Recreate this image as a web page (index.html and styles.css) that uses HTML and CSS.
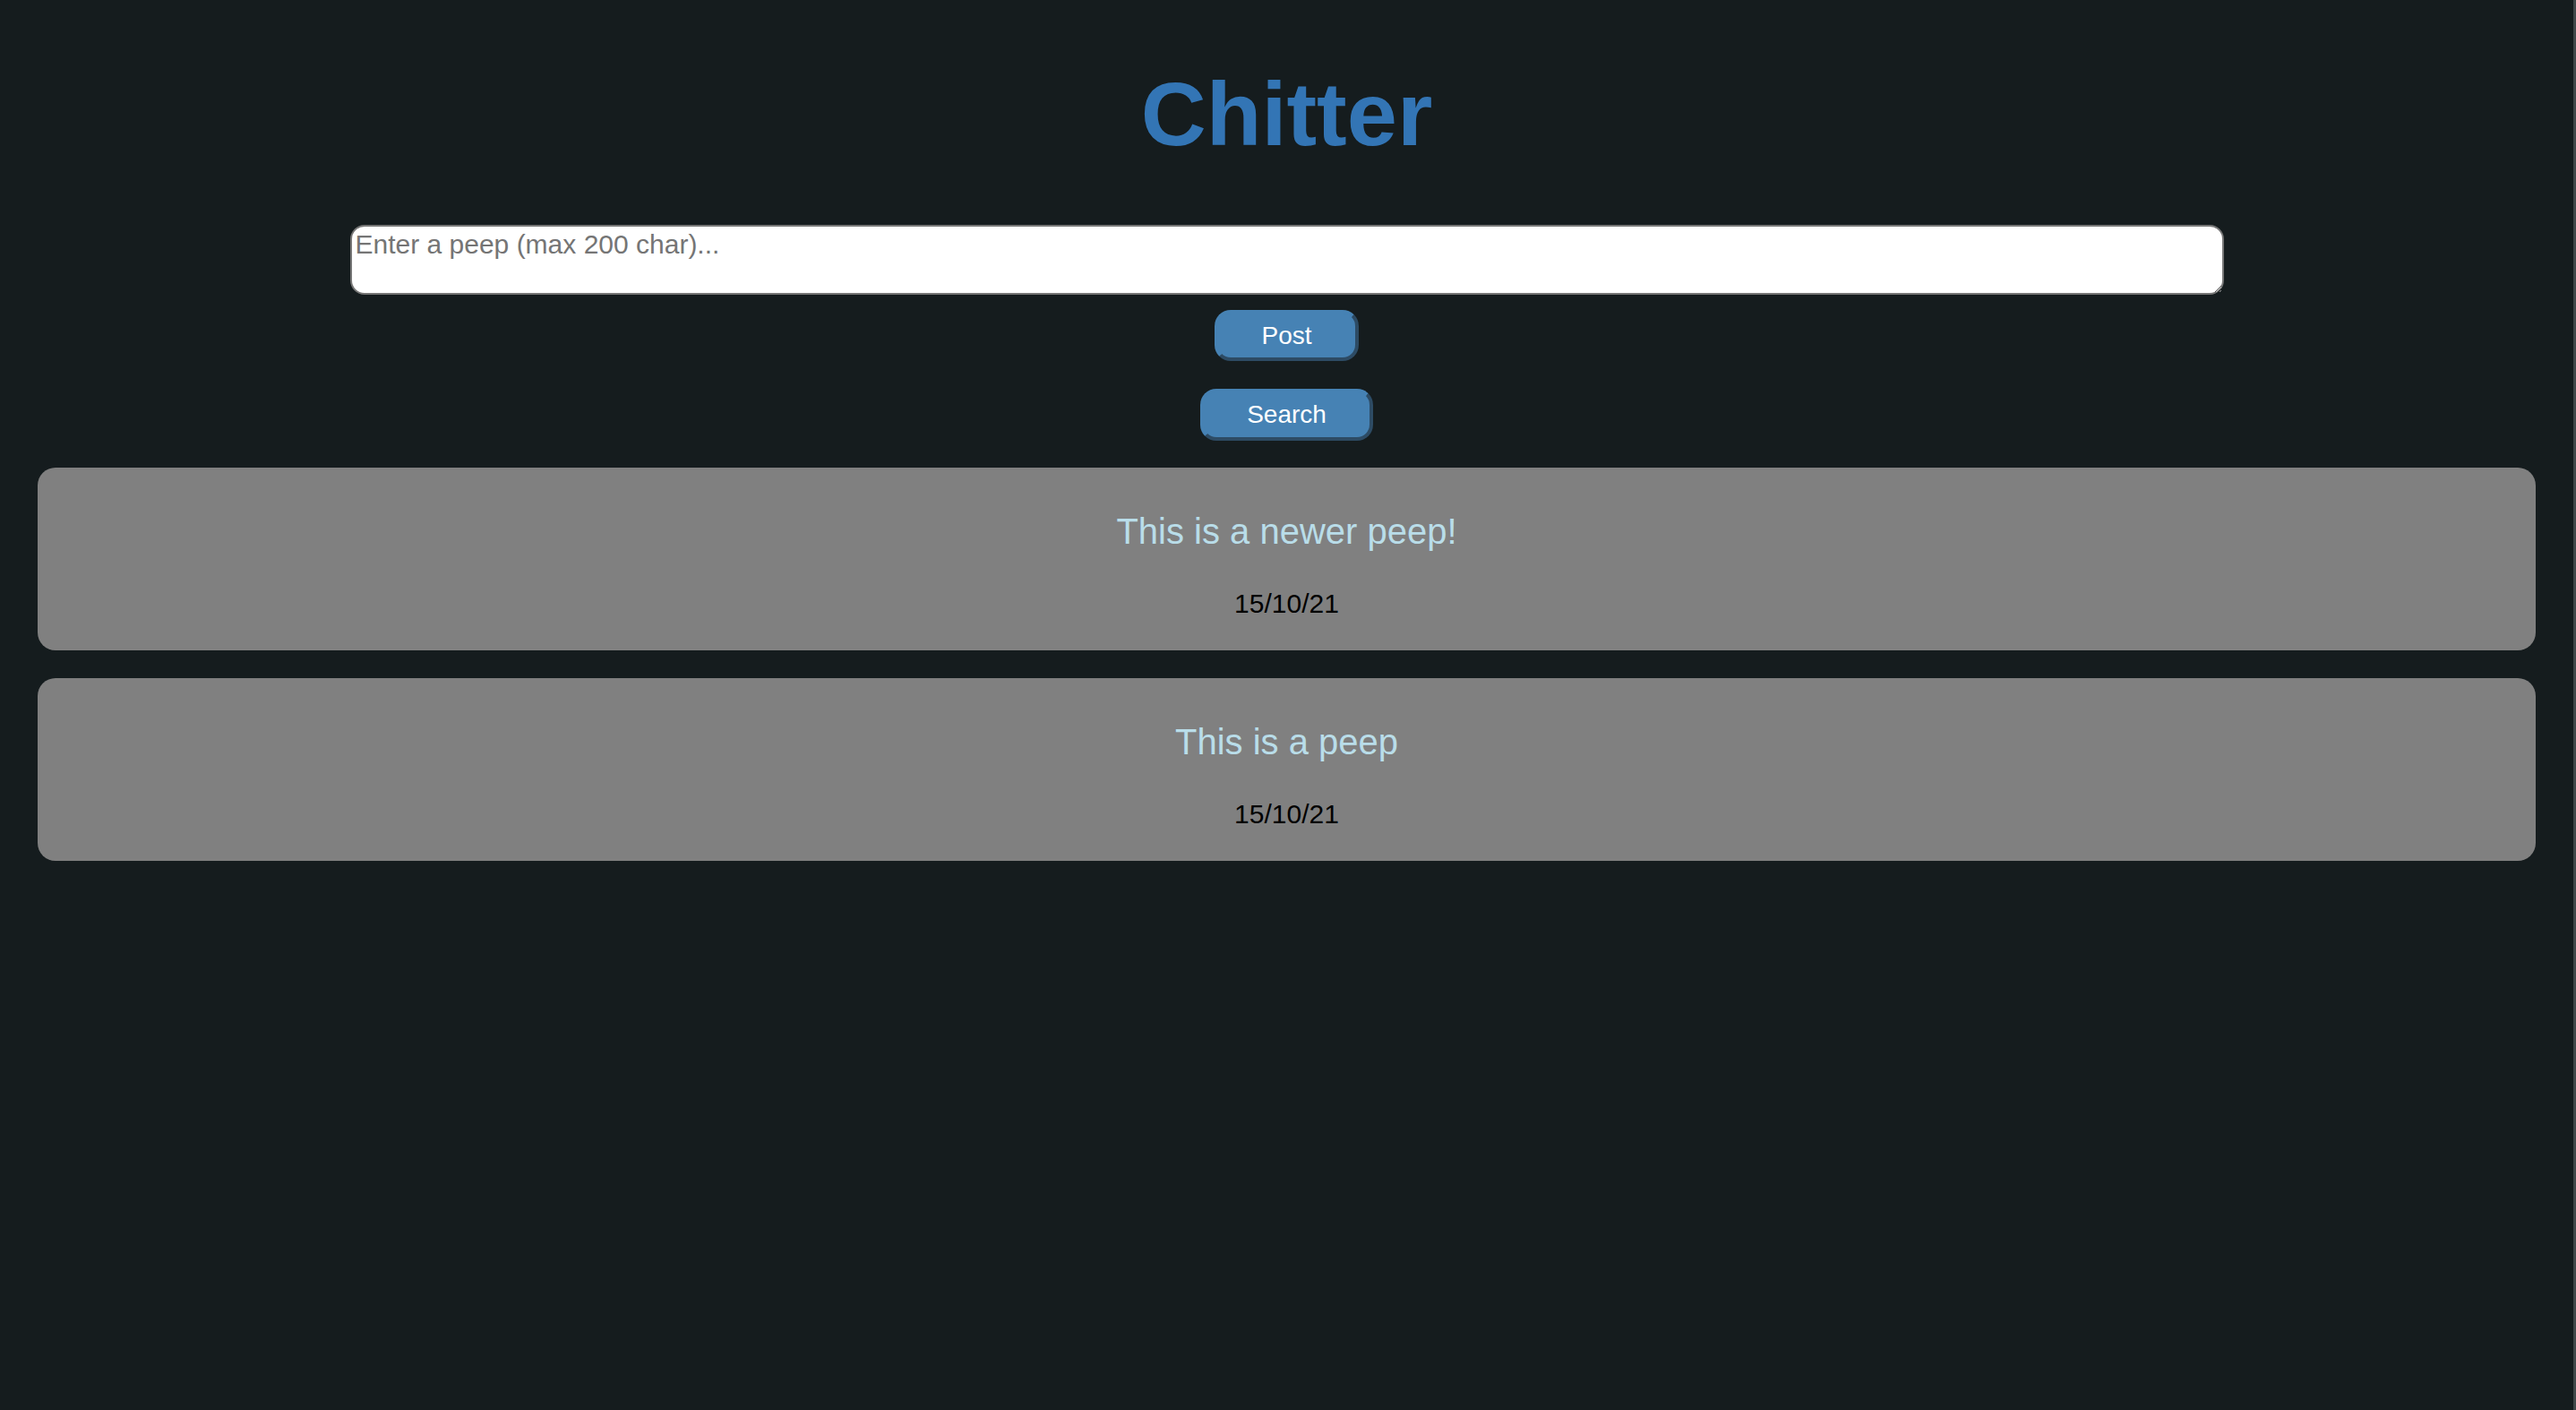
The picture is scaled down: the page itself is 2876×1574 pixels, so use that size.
FILE: index.html
```html
<!DOCTYPE html>
<html lang="en">
<head>
<meta charset="utf-8">
<title>Chitter</title>
<link rel="stylesheet" href="styles.css">
</head>
<body>
<main class="page">
  <h1 class="title">Chitter</h1>
  <form class="post-form">
    <textarea class="peep-input" placeholder="Enter a peep (max 200 char)..."></textarea>
    <button type="button" class="btn btn-post">Post</button>
  </form>
  <form class="search-form">
    <button type="button" class="btn btn-search">Search</button>
  </form>
  <section class="peeps">
    <article class="peep">
      <p class="peep-text">This is a newer peep!</p>
      <p class="peep-date">15/10/21</p>
    </article>
    <article class="peep">
      <p class="peep-text">This is a peep</p>
      <p class="peep-date">15/10/21</p>
    </article>
  </section>
</main>
</body>
</html>
```
FILE: styles.css
```css
html {
  background: #151c1e;
  border-right: 3px solid #41484a;
  min-height: 100%;
}

body {
  margin: 0;
  font-family: "Liberation Sans", Arial, Helvetica, sans-serif;
  color: #000;
}

.page {
  display: flex;
  flex-direction: column;
  align-items: center;
}

.title {
  margin: 69px 0 65px;
  font-size: 101px;
  font-weight: bold;
  line-height: 117px;
  color: #3375b5;
}

.post-form {
  display: flex;
  flex-direction: column;
  align-items: center;
  gap: 17px;
}

.peep-input {
  box-sizing: border-box;
  width: 2092px;
  height: 78px;
  margin: 0;
  padding: 4px;
  border: 2px solid #767676;
  border-radius: 16px;
  background: #fff;
  font-family: "Liberation Sans", Arial, Helvetica, sans-serif;
  font-size: 30px;
  line-height: 32px;
  color: #000;
}

.peep-input::placeholder {
  color: #757575;
}

.search-form {
  margin-top: 31px;
}

.btn {
  box-sizing: border-box;
  height: 57px;
  margin: 0;
  padding: 0 48px;
  border: 4px solid;
  border-color: #4682b4 #2d4b64 #2d4b64 #4682b4;
  border-radius: 18px;
  background: #4682b4;
  font-family: "Liberation Sans", Arial, Helvetica, sans-serif;
  font-size: 28px;
  line-height: 32px;
  color: #fff;
}

.btn-search {
  height: 58px;
}

.peeps {
  align-self: stretch;
  margin: 30px 42px 0;
  display: flex;
  flex-direction: column;
  gap: 31px;
}

.peep {
  background: #808080;
  border-radius: 20px;
  padding: 48px 0 36px;
  text-align: center;
}

.peep-text {
  margin: 0 0 42px;
  font-size: 40px;
  line-height: 46px;
  color: #b9dde9;
}

.peep-date {
  margin: 0;
  font-size: 30px;
  line-height: 32px;
  color: #000;
}
```
